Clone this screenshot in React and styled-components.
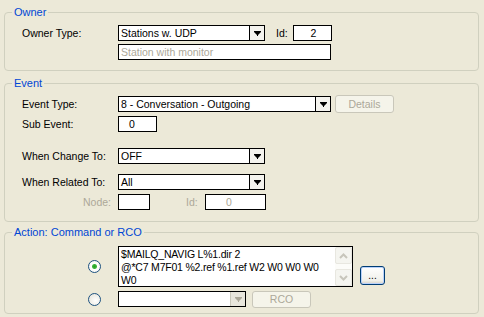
import styled, { createGlobalStyle } from 'styled-components';

const GlobalStyle = createGlobalStyle`
    html, body {
        margin: 0;
        background: #ECE9D8;
    }
    body {
        font-family: "Liberation Sans", Arial, sans-serif;
        font-size: 10.5px;
        color: #000;
    }
`

function Arrow({color}){
    return(
        <svg width="7" height="5" viewBox="0 0 7 5">
            <polygon points="0,0 7,0 7,1 4,4 4,5 3,5 3,4 0,1" fill={color} />
        </svg>
    )
}

function Chevron({up}){
    return(
        <svg width="9" height="6" viewBox="0 0 9 6">
            <polyline points={up ? "1,5 4.5,1.5 8,5" : "1,1 4.5,4.5 8,1"} fill="none" stroke="#C8C6BC" strokeWidth="2" />
        </svg>
    )
}

function Combo({width, value, disabled}){
    return(
        <ComboBox $width={width}>
            <ComboValue>{value}</ComboValue>
            <ComboArrow $disabled={disabled}>
                <Arrow color={disabled ? "#ACA899" : "#000"} />
            </ComboArrow>
        </ComboBox>
    )
}

export default function App(){
    return (
        <Page>
            <GlobalStyle />
            <Group>
                <Legend>Owner</Legend>
                <Body $top={6} $bottom={10}>
                    <Row>
                        <Label>Owner Type:</Label>
                        <Combo width={147} value="Stations w. UDP" />
                        <SmallLabel $left={11} $width={17}>Id:</SmallLabel>
                        <Field $width={39} $align="center">2</Field>
                    </Row>
                    <Row $gap={3}>
                        <Spacer />
                        <Field $width={213} $gray>Station with monitor</Field>
                    </Row>
                </Body>
            </Group>

            <Group $gap={6}>
                <Legend>Event</Legend>
                <Body $top={6} $bottom={11}>
                    <Row>
                        <Label>Event Type:</Label>
                        <Combo width={213} value="8 - Conversation - Outgoing" />
                        <Button $left={4} $width={59} $height={18} $disabled>Details</Button>
                    </Row>
                    <Row $gap={4}>
                        <Label>Sub Event:</Label>
                        <Field $width={39} $indent={10}>0</Field>
                    </Row>
                    <Row $gap={16}>
                        <Label>When Change To:</Label>
                        <Combo width={147} value="OFF" />
                    </Row>
                    <Row $gap={10}>
                        <Label>When Related To:</Label>
                        <Combo width={147} value="All" />
                    </Row>
                    <Row $gap={4}>
                        <Label $gray $right>Node:</Label>
                        <Field $width={32} />
                        <SmallLabel $left={36} $width={19} $gray>Id:</SmallLabel>
                        <Field $width={61} $indent={20} $gray>0</Field>
                    </Row>
                </Body>
            </Group>

            <Group $gap={4}>
                <Legend>Action: Command or RCO</Legend>
                <Body $top={7} $bottom={6}>
                    <Row $auto>
                        <RadioCell><Radio $checked /></RadioCell>
                        <Memo>
                            <MemoText>
                                $MAILQ_NAVIG L%1.dir 2<br />
                                @*C7 M7F01 %2.ref %1.ref W2 W0 W0 W0<br />
                                W0
                            </MemoText>
                            <ScrollBar>
                                <ScrollBtn><Chevron up /></ScrollBtn>
                                <ScrollBtn><Chevron /></ScrollBtn>
                            </ScrollBar>
                        </Memo>
                        <Button $left={7} $width={25} $height={19} $bottom={2} $default>...</Button>
                    </Row>
                    <Row $gap={4}>
                        <RadioCell><Radio /></RadioCell>
                        <Combo width={128} value="" disabled />
                        <Button $left={6} $width={59} $height={17} $disabled>RCO</Button>
                    </Row>
                </Body>
            </Group>
        </Page>
    )
}

const Page = styled.div`
    display: flex;
    flex-direction: column;
    padding: 6px 5px 0 4px;
    width: 484px;
    height: 317px;
    box-sizing: border-box;
`

const Group = styled.fieldset`
    margin: ${p => p.$gap || 0}px 0 0 0;
    padding: 0;
    border: 1px solid #D0D0BF;
    border-radius: 4px;
    min-width: 0;
`

const Legend = styled.legend`
    margin-left: 7px;
    padding: 0 2px;
    color: #0046D5;
    font-size: 11px;
    line-height: 13px;
`

const Body = styled.div`
    display: flex;
    flex-direction: column;
    padding: ${p => p.$top}px 0 ${p => p.$bottom}px 17px;
`

const Row = styled.div`
    display: flex;
    align-items: ${p => p.$auto ? 'stretch' : 'center'};
    height: ${p => p.$auto ? 'auto' : '16px'};
    margin-top: ${p => p.$gap || 0}px;
`

const Label = styled.div`
    width: 96px;
    box-sizing: border-box;
    padding-right: ${p => p.$right ? '7px' : '0'};
    text-align: ${p => p.$right ? 'right' : 'left'};
    color: ${p => p.$gray ? '#ACA899' : '#000'};
    white-space: nowrap;
`

const Spacer = styled.div`
    width: 96px;
`

const SmallLabel = styled.div`
    margin-left: ${p => p.$left}px;
    width: ${p => p.$width}px;
    color: ${p => p.$gray ? '#ACA899' : '#000'};
`

const Field = styled.div`
    width: ${p => p.$width}px;
    height: 16px;
    box-sizing: border-box;
    border: 1px solid #000;
    background: #fff;
    padding-left: ${p => p.$indent || 2}px;
    text-align: ${p => p.$align || 'left'};
    color: ${p => p.$gray ? '#ACA899' : '#000'};
    line-height: 14px;
    white-space: nowrap;
    overflow: hidden;
`

const ComboBox = styled.div`
    display: flex;
    width: ${p => p.$width}px;
    height: 16px;
    box-sizing: border-box;
    border: 1px solid #000;
    background: #fff;
`

const ComboValue = styled.div`
    flex: 1;
    padding-left: 2px;
    line-height: 14px;
    white-space: nowrap;
    overflow: hidden;
`

const ComboArrow = styled.div`
    width: 14px;
    display: flex;
    align-items: center;
    justify-content: center;
    border-left: 1px solid ${p => p.$disabled ? '#C9C7BA' : '#000'};
    background: ${p => p.$disabled ? '#E8E6DC' : '#F4F3EE'};
`

const Button = styled.div`
    margin-left: ${p => p.$left}px;
    align-self: ${p => p.$bottom ? 'flex-end' : 'center'};
    margin-bottom: ${p => p.$bottom || 0}px;
    width: ${p => p.$width}px;
    height: ${p => p.$height}px;
    box-sizing: border-box;
    display: flex;
    align-items: center;
    justify-content: center;
    border-radius: 3px;
    border: 1px solid ${p => p.$disabled ? '#C9C7BA' : '#003C74'};
    background: ${p => p.$disabled ? '#F5F4EA' : 'linear-gradient(#FFFFFF, #F0F0EA 80%, #D6D0C5)'};
    box-shadow: ${p => p.$default ? 'inset 0 0 0 1px #B9D1FA' : 'none'};
    color: ${p => p.$disabled ? '#ACA899' : '#000'};
    font-size: ${p => p.$default ? '10px' : '10.5px'};
`

const RadioCell = styled.div`
    width: 96px;
    display: flex;
    align-items: center;
    padding-left: 66px;
    box-sizing: border-box;
`

const Radio = styled.div`
    width: 13px;
    height: 13px;
    box-sizing: border-box;
    border-radius: 50%;
    border: 1px solid #1C5180;
    background: ${p => p.$checked
        ? 'radial-gradient(circle at 50% 50%, #21A121 0, #3DB43D 2px, #FFFFFF 3px, #F0F0EA 100%)'
        : 'radial-gradient(circle at 60% 60%, #FFFFFF 0, #ECEAE2 70%, #DCD8CC 100%)'};
`

const Memo = styled.div`
    display: flex;
    width: 235px;
    height: 41px;
    box-sizing: border-box;
    border: 1px solid #000;
    background: #fff;
`

const MemoText = styled.div`
    flex: 1;
    padding: 1px 0 0 2px;
    line-height: 13px;
    white-space: nowrap;
    overflow: hidden;
    letter-spacing: -0.2px;
`

const ScrollBar = styled.div`
    width: 17px;
    display: flex;
    flex-direction: column;
    justify-content: space-between;
    background: #FCFCF9;
`

const ScrollBtn = styled.div`
    height: 17px;
    box-sizing: border-box;
    border: 1px solid #E8E7E0;
    border-radius: 2px;
    background: #F5F5F0;
    display: flex;
    align-items: center;
    justify-content: center;
`
